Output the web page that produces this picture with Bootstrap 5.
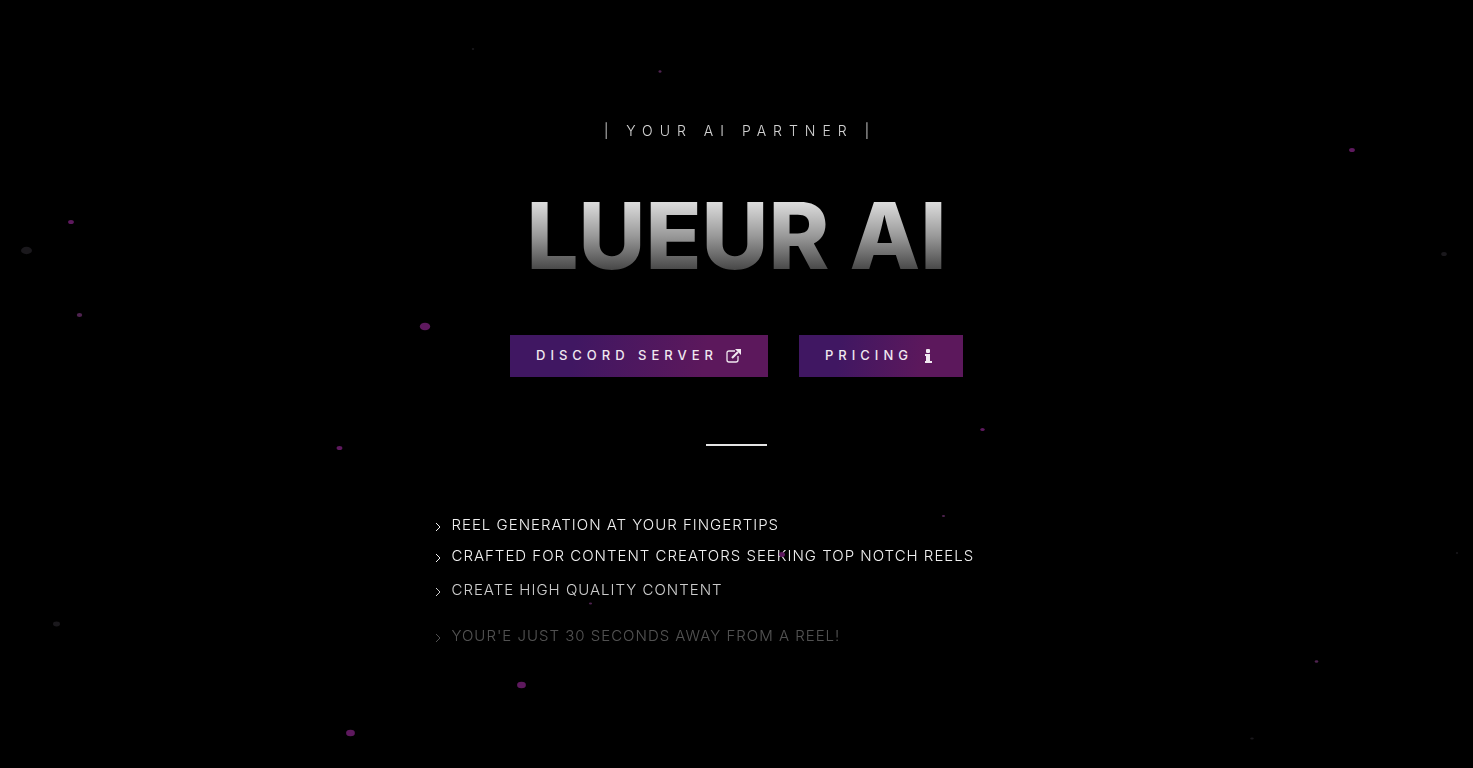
<!DOCTYPE html>
<html lang="en">
<head>
<meta charset="utf-8">
<meta name="viewport" content="width=device-width, initial-scale=1">
<title>Lueur AI</title>
<link href="https://cdn.jsdelivr.net/npm/bootstrap@5.3.0/dist/css/bootstrap.min.css" rel="stylesheet">
<style>
body { background: #000; color: #fff; font-family: Inter, sans-serif; }
.hero { padding-top: 120px; }
.tagline { font-size: 14px; line-height: 22px; font-weight: 300; letter-spacing: 7px; padding-left: 7px; opacity: .82; margin-bottom: 38px; }
.brand { font-size: 92px; line-height: 112px; font-weight: 800; margin-bottom: 43px;
  background: linear-gradient(#dcdcdc 20%, #999 50%, #484848 80%); -webkit-background-clip: text; background-clip: text; color: transparent; }
.actions { gap: 31px; }
.btn-glow { --bs-btn-color: #f0e8f0; --bs-btn-hover-color: #fff; --bs-btn-active-color: #fff; height: 42px; padding: 0 26px; border: 0; border-radius: 0; font-size: 13px; font-weight: 500; letter-spacing: 5px; background: linear-gradient(100deg, #401762 25%, #5c185c 75%); }
.divider { width: 61px; height: 2px; background: #e4e4e4; margin: 67px auto 68px; }
.features { max-width: 604px; font-size: 15px; line-height: 22px; font-weight: 300; letter-spacing: 1px; opacity: .94; }
.features li { gap: 9px; }
.features svg { margin-top: 3px; }
.features li + li { margin-top: 9px; }
.features .fading { opacity: .85; }
.features li + .fading { margin-top: 12px; }
.features .faint { opacity: .34; }
.features li + .faint { margin-top: 24px; }
.particles { pointer-events: none; }
</style>
</head>
<body class="position-relative min-vh-100 overflow-hidden">
<main class="hero container text-center">
  <p class="tagline">| YOUR AI PARTNER |</p>
  <h1 class="brand">LUEUR AI</h1>
  <div class="actions d-flex flex-wrap justify-content-center">
    <button type="button" class="btn btn-glow d-flex align-items-center gap-2">DISCORD SERVER
      <svg width="16" height="16" viewBox="0 0 16 16" fill="none" stroke="currentColor" stroke-width="1.3" aria-hidden="true"><path d="M9 3H3Q1 3 1 5v7q0 2 2 2h7q2 0 2-2V8"/><path d="M6 10 12 4" stroke-width="2.2"/><path d="M9 1h6v6z" fill="currentColor" stroke="none"/></svg>
    </button>
    <button type="button" class="btn btn-glow d-flex align-items-center gap-2">PRICING
      <svg width="16" height="16" viewBox="0 0 16 16" fill="currentColor" aria-hidden="true"><rect x="5" y="1" width="4" height="4" rx="1"/><path d="M4 6h5v7h2v2H4v-2h1V8H4z"/></svg>
    </button>
  </div>
  <div class="divider"></div>
  <ul class="features list-unstyled mx-auto text-start mb-0">
    <li class="d-flex align-items-center"><svg width="8" height="10" viewBox="0 0 8 10" fill="none" stroke="currentColor" aria-hidden="true"><path d="m1 1 4 4-4 4"/></svg>REEL GENERATION AT YOUR FINGERTIPS</li>
    <li class="d-flex align-items-center"><svg width="8" height="10" viewBox="0 0 8 10" fill="none" stroke="currentColor" aria-hidden="true"><path d="m1 1 4 4-4 4"/></svg>CRAFTED FOR CONTENT CREATORS SEEKING TOP NOTCH REELS</li>
    <li class="d-flex align-items-center fading"><svg width="8" height="10" viewBox="0 0 8 10" fill="none" stroke="currentColor" aria-hidden="true"><path d="m1 1 4 4-4 4"/></svg>CREATE HIGH QUALITY CONTENT</li>
    <li class="d-flex align-items-center faint"><svg width="8" height="10" viewBox="0 0 8 10" fill="none" stroke="currentColor" aria-hidden="true"><path d="m1 1 4 4-4 4"/></svg>YOUR'E JUST 30 SECONDS AWAY FROM A REEL!</li>
  </ul>
</main>
<svg class="particles position-absolute top-0 start-0 w-100 h-100" viewBox="0 0 1473 768" preserveAspectRatio="none" fill="#5e195e" aria-hidden="true">
  <ellipse cx="425" cy="326.500" rx="5.200" ry="3.800"/>
  <ellipse cx="521.500" cy="685" rx="4.400" ry="3.200"/>
  <ellipse cx="350.500" cy="733" rx="4.400" ry="3.200"/>
  <ellipse cx="71" cy="222" rx="2.900" ry="2"/>
  <ellipse cx="339.500" cy="448" rx="2.900" ry="2"/>
  <ellipse cx="1352" cy="150" rx="2.900" ry="2"/>
  <ellipse cx="782" cy="554.500" rx="3" ry="2.500"/>
  <ellipse cx="982.500" cy="429.500" rx="2.200" ry="1.600"/>
  <g fill="#4f2350">
    <ellipse cx="79.500" cy="315" rx="2.700" ry="1.900"/>
    <ellipse cx="943.500" cy="516" rx="1.600" ry="1"/>
    <ellipse cx="590.500" cy="603.500" rx="1.600" ry="1"/>
    <ellipse cx="1316.500" cy="661.500" rx="1.800" ry="1.200"/>
    <ellipse cx="660" cy="71.500" rx="1.500" ry="1.200"/>
  </g>
  <g fill="#1a181c">
    <ellipse cx="26.500" cy="250.500" rx="5.500" ry="3.700"/>
    <ellipse cx="56.500" cy="624" rx="3.500" ry="2.400"/>
    <ellipse cx="1444" cy="254" rx="2.800" ry="2"/>
    <ellipse cx="1252" cy="738.500" rx="1.800" ry="1"/>
    <ellipse cx="473" cy="49" rx="1.200" ry="1"/>
    <ellipse cx="1457" cy="553" rx="1" ry="1"/>
  </g>
</svg>
</body>
</html>
